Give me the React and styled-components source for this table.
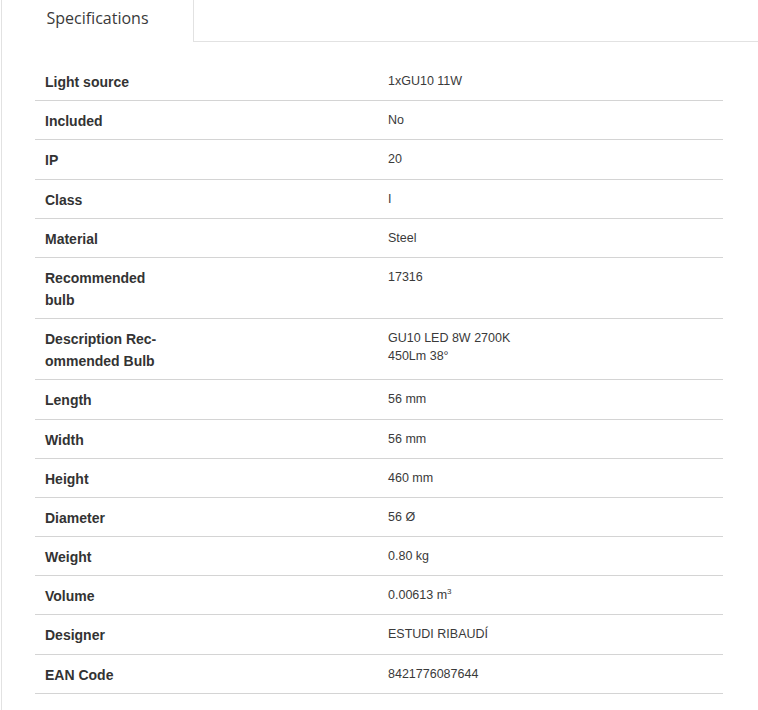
import React from 'react'
import styled, { createGlobalStyle } from 'styled-components'

const GlobalStyle = createGlobalStyle`
  html, body {
    margin: 0;
    padding: 0;
    background: #ffffff;
  }
  body {
    font-family: "Liberation Sans", Arial, sans-serif;
    color: #333333;
  }
`

const Panel = styled.div`
  margin-left: 1px;
  min-height: 710px;
  border-left: 1px solid #e2e2e2;
  box-sizing: border-box;
`

const TabBar = styled.div`
  display: flex;
  height: 42px;
`

const Tab = styled.div`
  width: 192px;
  box-sizing: border-box;
  padding-top: 7px;
  border-right: 1px solid #e2e2e2;
  font-family: "Open Sans", sans-serif;
  font-size: 16px;
  line-height: 22px;
  text-align: center;
  color: #3a3a3a;
`

const TabFill = styled.div`
  flex: 1;
  border-bottom: 1px solid #e2e2e2;
`

const Table = styled.div`
  margin: 20px 35px 0 33px;
`

const Row = styled.div`
  display: grid;
  grid-template-columns: 353px 1fr;
  border-bottom: 1px solid #d4d4d4;
  padding: 9px 0 7.2px;
`

const Label = styled.div`
  padding-left: 10px;
  max-width: 125px;
  font-size: 14px;
  font-weight: 700;
  line-height: 22px;
  color: #333333;
`

const Value = styled.div`
  padding-top: 1px;
  font-size: 12.5px;
  line-height: 18px;
  color: #3a3a3a;

  sup {
    font-size: 8px;
    line-height: 0;
    vertical-align: 5px;
  }
`

const ValueText = styled.span`
  display: inline-block;
  max-width: 135px;
`

const specs = [
  ['Light source', '1xGU10 11W'],
  ['Included', 'No'],
  ['IP', '20'],
  ['Class', 'I'],
  ['Material', 'Steel'],
  ['Recommended bulb', '17316'],
  ['Description Rec\u00ADommended Bulb', 'GU10 LED 8W 2700K 450Lm 38°'],
  ['Length', '56 mm'],
  ['Width', '56 mm'],
  ['Height', '460 mm'],
  ['Diameter', '56 Ø'],
  ['Weight', '0.80 kg'],
  ['Volume', <>0.00613 m<sup>3</sup></>],
  ['Designer', 'ESTUDI RIBAUDÍ'],
  ['EAN Code', '8421776087644'],
]

const App = () => (
  <>
    <GlobalStyle />
    <Panel>
      <TabBar>
        <Tab>Specifications</Tab>
        <TabFill />
      </TabBar>
      <Table>
        {specs.map(([label, value], i) => (
          <Row key={i}>
            <Label>{label}</Label>
            <Value>
              <ValueText>{value}</ValueText>
            </Value>
          </Row>
        ))}
      </Table>
    </Panel>
  </>
)

export default App
